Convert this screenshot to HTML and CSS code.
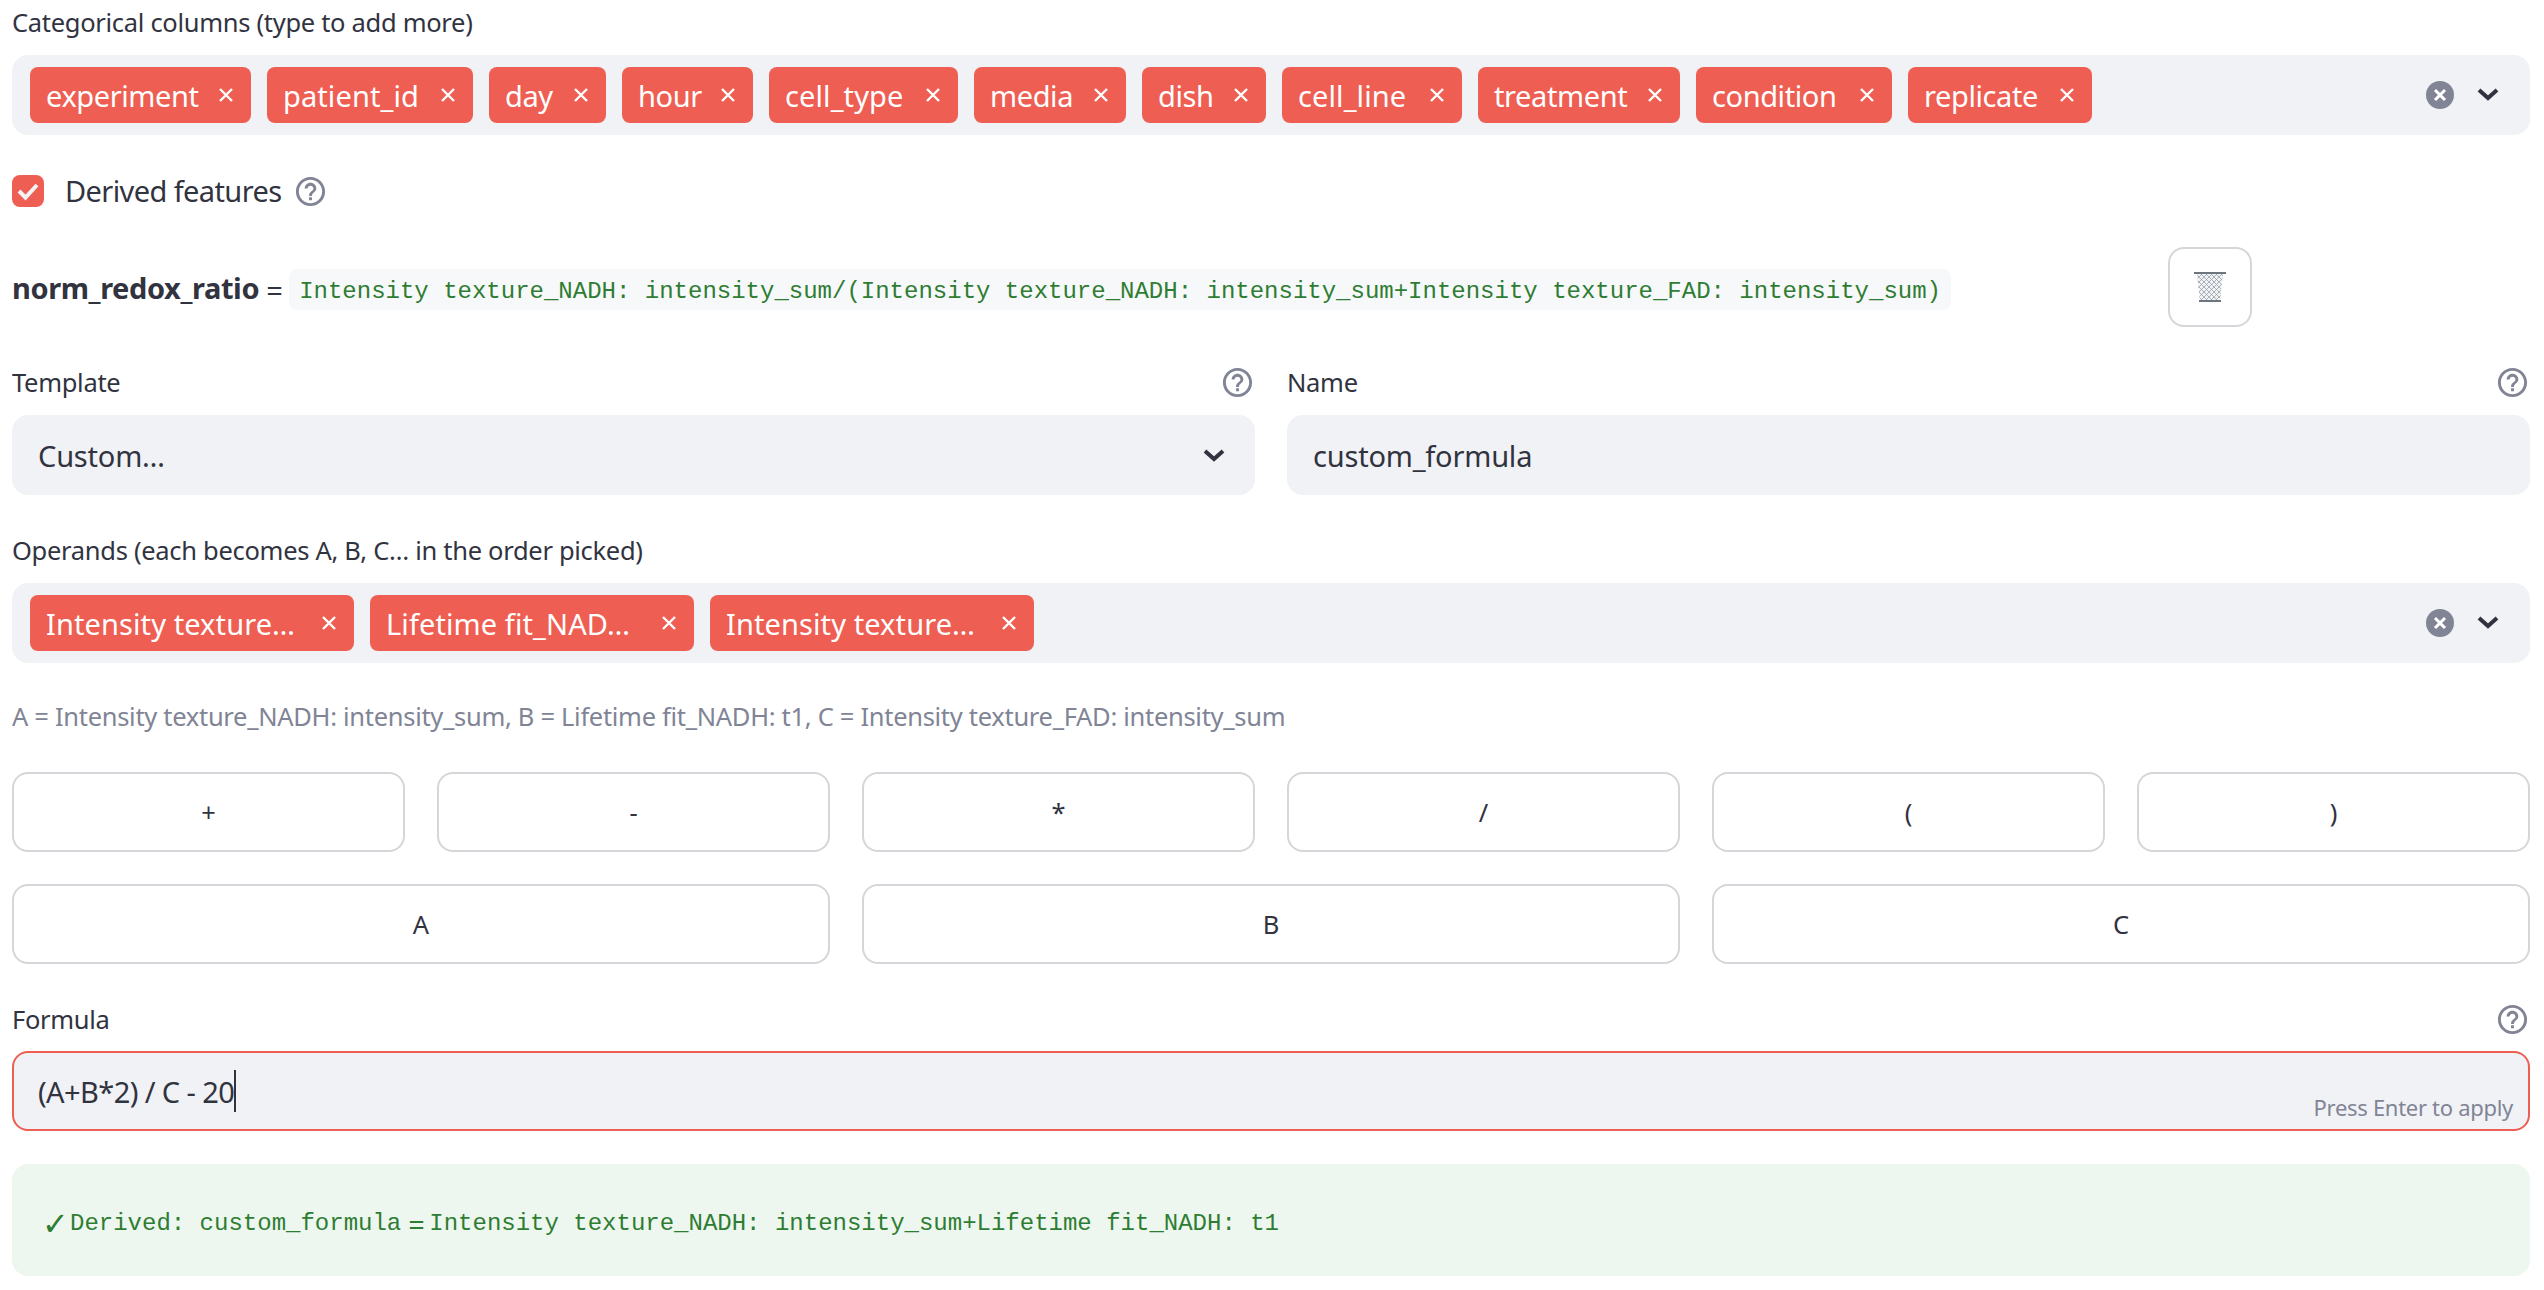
FILE: index.html

```html
<!DOCTYPE html>
<html lang="en">
<head>
  <meta charset="UTF-8">
  <title>Derived features</title>
  <link rel="stylesheet" href="styles.css">
</head>
<body>
  <svg class="defs" width="0" height="0">
    <symbol id="help" viewBox="0 0 24 24">
      <path fill="currentColor" d="M11 18h2v-2h-2v2zm1-16C6.48 2 2 6.48 2 12s4.48 10 10 10 10-4.48 10-10S17.52 2 12 2zm0 18c-4.41 0-8-3.59-8-8s3.59-8 8-8 8 3.59 8 8-3.59 8-8 8zm0-14c-2.21 0-4 1.79-4 4h2c0-1.1.9-2 2-2s2 .9 2 2c0 2-3 1.75-3 5h2c0-2.25 3-2.5 3-5 0-2.21-1.79-4-4-4z"/>
    </symbol>
    <symbol id="cross" viewBox="0 0 16 16">
      <path fill="none" stroke="currentColor" stroke-width="2.4" d="M2 2l12 12M14 2L2 14"/>
    </symbol>
    <symbol id="chevron" viewBox="0 0 22 14">
      <path fill="none" stroke="currentColor" stroke-width="4" d="M2 3l9 8 9-8"/>
    </symbol>
    <symbol id="clear" viewBox="0 0 28 28">
      <circle cx="14" cy="14" r="14" fill="#808495"/>
      <path fill="none" stroke="#fff" stroke-width="3" d="M9 9l10 10M19 9L9 19"/>
    </symbol>
    <pattern id="mesh" width="5" height="5" patternUnits="userSpaceOnUse">
      <path fill="none" stroke="#8d95a0" stroke-width="0.7" d="M0 0l5 5M5 0L0 5"/>
    </pattern>
  </svg>

  <main class="page">
    <label class="label first">Categorical columns (type to add more)</label>
    <div class="box multi">
      <div class="tags cat-tags">
        <span class="tag">experiment<svg class="x"><use href="#cross"/></svg></span>
        <span class="tag tag-us">patient_id<svg class="x"><use href="#cross"/></svg></span>
        <span class="tag">day<svg class="x"><use href="#cross"/></svg></span>
        <span class="tag">hour<svg class="x"><use href="#cross"/></svg></span>
        <span class="tag tag-us">cell_type<svg class="x"><use href="#cross"/></svg></span>
        <span class="tag">media<svg class="x"><use href="#cross"/></svg></span>
        <span class="tag">dish<svg class="x"><use href="#cross"/></svg></span>
        <span class="tag tag-us">cell_line<svg class="x"><use href="#cross"/></svg></span>
        <span class="tag">treatment<svg class="x"><use href="#cross"/></svg></span>
        <span class="tag">condition<svg class="x"><use href="#cross"/></svg></span>
        <span class="tag">replicate<svg class="x"><use href="#cross"/></svg></span>
      </div>
      <svg class="clear"><use href="#clear"/></svg>
      <svg class="chevron"><use href="#chevron"/></svg>
    </div>

    <div class="check-row">
      <span class="checkbox">
        <svg viewBox="0 0 32 32"><path fill="none" stroke="#f3f3f5" stroke-width="4" d="M7 16l6.500 6.500L25 10"/></svg>
      </span>
      <span class="check-text">Derived features</span>
      <svg class="help"><use href="#help"/></svg>
    </div>

    <div class="feature-row">
      <div class="feature">
        <strong>norm_redox_ratio</strong><span class="eq">=</span><code class="chip">Intensity texture_NADH: intensity_sum/(Intensity texture_NADH: intensity_sum+Intensity texture_FAD: intensity_sum)</code>
      </div>
      <button class="btn trash">
        <svg viewBox="0 0 32 30" width="32" height="30">
          <path fill="#f1f2f4" d="M3 2h26l-3 27H6z"/>
          <path fill="url(#mesh)" d="M3 2h26l-3 27H6z"/>
          <path fill="#6d757f" d="M0 0h32v2H0zM5 28h22v2H5z"/>
        </svg>
      </button>
    </div>

    <div class="two-col">
      <div>
        <div class="label-row"><label class="label">Template</label><svg class="help"><use href="#help"/></svg></div>
        <div class="box select"><span>Custom…</span><svg class="chevron"><use href="#chevron"/></svg></div>
      </div>
      <div>
        <div class="label-row"><label class="label">Name</label><svg class="help"><use href="#help"/></svg></div>
        <div class="box select"><span>custom_formula</span></div>
      </div>
    </div>

    <label class="label operands">Operands (each becomes A, B, C… in the order picked)</label>
    <div class="box multi">
      <div class="tags">
        <span class="tag tag-cut"><span class="tag-text">Intensity texture…</span><svg class="x"><use href="#cross"/></svg></span>
        <span class="tag tag-cut"><span class="tag-text">Lifetime fit_NAD…</span><svg class="x"><use href="#cross"/></svg></span>
        <span class="tag tag-cut"><span class="tag-text">Intensity texture…</span><svg class="x"><use href="#cross"/></svg></span>
      </div>
      <svg class="clear"><use href="#clear"/></svg>
      <svg class="chevron"><use href="#chevron"/></svg>
    </div>

    <p class="caption">A = Intensity texture_NADH: intensity_sum, B = Lifetime fit_NADH: t1, C = Intensity texture_FAD: intensity_sum</p>

    <div class="buttons six">
      <button class="btn">+</button>
      <button class="btn">-</button>
      <button class="btn">*</button>
      <button class="btn">/</button>
      <button class="btn">(</button>
      <button class="btn">)</button>
    </div>
    <div class="buttons three">
      <button class="btn">A</button>
      <button class="btn">B</button>
      <button class="btn">C</button>
    </div>

    <div class="label-row formula-label"><label class="label">Formula</label><svg class="help"><use href="#help"/></svg></div>
    <div class="box formula">
      <span>(A+B*2) / C - 20</span><span class="caret"></span>
      <span class="hint">Press Enter to apply</span>
    </div>

    <div class="alert">
      <span class="tick">✓</span><code>Derived: custom_formula</code><span class="eq">=</span><code>Intensity texture_NADH: intensity_sum+Lifetime fit_NADH: t1</code>
    </div>
  </main>
</body>
</html>
```

FILE: styles.css

```css
body {
  margin: 0;
  background: white;
  color: #31333f;
  font-family: "Noto Sans", sans-serif;
  font-size: 29px;
  letter-spacing: -0.6px;
}
.defs { position: absolute; }
.page {
  width: 2518px;
  margin-left: 12px;
  height: 1290px;
  overflow: hidden;
}
.label {
  display: block;
  height: 46px;
  line-height: 46px;
  font-size: 25.500px;
  letter-spacing: -0.3px;
}
.first { height: 44px; line-height: 44px; margin-bottom: 11px; }
.operands { margin-top: 32px; margin-bottom: 10px; }
.label-row {
  display: flex;
  justify-content: space-between;
  align-items: center;
  height: 46px;
  margin-bottom: 10px;
}
.help {
  width: 35px;
  height: 35px;
  color: #808495;
  flex: none;
}
.box {
  background: #f0f2f6;
  border-radius: 16px;
  height: 80px;
  box-sizing: border-box;
  display: flex;
  align-items: center;
}
.multi { padding: 0 20px 0 18px; }
.multi .chevron { margin-right: 11px; margin-bottom: 2px; }
.tags {
  display: flex;
  gap: 16px;
  flex: 1;
}
.cat-tags {
  display: grid;
  grid-template-columns: 221px 206px 117px 131px 189px 152px 124px 180px 202px 196px 184px;
}
.tag {
  display: flex;
  align-items: center;
  height: 56px;
  padding: 0 17px 0 16px;
  background: #ee5e52;
  color: white;
  border-radius: 8px;
  letter-spacing: -0.4px;
  box-sizing: border-box;
}
.tag-us { letter-spacing: 0.1px; }
.tag-cut { width: 324px; letter-spacing: 0.1px; }
.tag-text { flex: 1; white-space: nowrap; }
.x {
  width: 16px;
  height: 16px;
  margin-left: auto;
  flex: none;
}
.clear { width: 28px; height: 28px; flex: none; margin-right: 23px; }
.chevron { width: 22px; height: 14px; flex: none; color: #31333f; }
.check-row {
  display: flex;
  align-items: center;
  height: 32px;
  margin-top: 40px;
}
.checkbox {
  width: 32px;
  height: 32px;
  border-radius: 8px;
  background: #ee5e52;
  margin-right: 21px;
}
.checkbox svg { display: block; }
.check-text { margin-right: 11px; padding-bottom: 2px; }
.feature-row {
  display: flex;
  align-items: center;
  margin-top: 40px;
  height: 80px;
}
.feature {
  width: 2156px;
  display: flex;
  align-items: center;
  padding-top: 4px;
}
strong {
  font-weight: 700;
  font-size: 29px;
  letter-spacing: -0.4px;
  padding-bottom: 3px;
}
.eq { margin: 0 7px; }
code {
  font-family: "Liberation Mono", monospace;
  font-size: 24px;
  letter-spacing: 0;
  color: #2e7d32;
}
.chip {
  background: #f7f8fa;
  border-radius: 8px;
  padding: 2px 10px 0;
  height: 41px;
  line-height: 41px;
  box-sizing: border-box;
}
.btn {
  font: inherit;
  color: inherit;
  background: white;
  border: 2px solid #d5d6d9;
  border-radius: 16px;
  height: 80px;
  padding: 0;
  letter-spacing: 0;
  font-size: 25.500px;
}
.trash {
  width: 84px;
  display: flex;
  align-items: center;
  justify-content: center;
}
.two-col {
  display: grid;
  grid-template-columns: 1fr 1fr;
  gap: 32px;
  margin-top: 32px;
}
.select {
  padding: 0 30px 0 26px;
  justify-content: space-between;
  letter-spacing: -0.2px;
}
.caption {
  margin: 33px 0 0;
  height: 40px;
  line-height: 40px;
  font-size: 25.500px;
  letter-spacing: -0.3px;
  color: #808495;
}
.buttons {
  display: grid;
  gap: 32px;
  margin-top: 32px;
}
.six { grid-template-columns: repeat(6, 1fr); margin-top: 36px; }
.three { grid-template-columns: repeat(3, 1fr); }
.formula-label { margin-top: 32px; margin-bottom: 9px; }
.formula {
  position: relative;
  background: #f0f2f6;
  border: 2px solid #ee5e52;
  padding-left: 24px;
}
.caret {
  width: 2px;
  height: 42px;
  background: #31333f;
}
.hint {
  position: absolute;
  right: 15px;
  bottom: 7px;
  font-size: 22px;
  letter-spacing: -0.3px;
  color: #808495;
}
.alert {
  display: flex;
  align-items: center;
  height: 112px;
  margin-top: 33px;
  padding: 6px 0 0 30px;
  box-sizing: border-box;
  background: #edf7ef;
  border-radius: 16px;
  color: #2e7d32;
}
.tick { font-size: 32px; width: 28px; line-height: 1; }
.alert .eq { margin: 0 5px 0 7px; }
```
